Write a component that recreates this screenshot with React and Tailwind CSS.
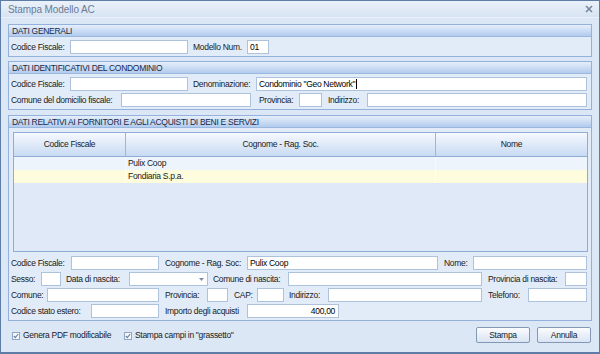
import React from 'react';

const L = ({ c = '', children }) => (
  <div className={`shrink-0 h-[14px] leading-[14px] whitespace-nowrap text-[#1a1a1a] ${c}`}>{children}</div>
);

const I = ({ c = '', children }) => (
  <div className={`shrink-0 h-[14px] bg-white border border-[#aec2dc] leading-[12px] px-[2px] whitespace-nowrap overflow-hidden ${c}`}>{children}</div>
);

function Group({ title, c = '', children }) {
  return (
    <div className={`border border-[#93b1db] bg-[#e2ecf8] ${c}`}>
      <div className="h-[12px] bg-linear-to-b from-[#e6effb] to-[#b2cbed] border-b border-[#9ab7df] px-[3px] leading-[12px] text-[#17294a]">
        {title}
      </div>
      {children}
    </div>
  );
}

function Check({ children, c = '' }) {
  return (
    <div className={`flex items-center ${c}`}>
      <div className="w-[8px] h-[8px] shrink-0 border border-[#8fa6c6] bg-[#f4f7fb] flex items-center justify-center">
        <svg width="6" height="6" viewBox="0 0 6 6">
          <path d="M0.8 3 L2.3 4.6 L5.2 1" fill="none" stroke="#6c7f99" strokeWidth="1.1" />
        </svg>
      </div>
      <span className="ml-[3px] text-[#1a1a1a] whitespace-nowrap">{children}</span>
    </div>
  );
}

function Btn({ children }) {
  return (
    <div className="w-[54px] h-[16px] rounded-[2px] border border-[#8497b5] bg-linear-to-b from-[#fbfcfe] to-[#d9e4f3] flex items-center justify-center text-[#1a1a1a]">
      {children}
    </div>
  );
}

export default function App() {
  return (
    <div className="w-[600px] h-[354px] border border-[#5d7ca6] border-b-2 bg-[#dce7f5] flex flex-col font-['Liberation_Sans',Arial,sans-serif] text-[8.5px] tracking-[-0.3px] overflow-hidden">
      <div className="h-[17px] shrink-0 bg-linear-to-b from-[#eaf1fa] to-[#d8e4f3] border-b border-[#e9f0fa] flex items-center justify-between pl-[7px] pr-[6px]">
        <span className="text-[10px] tracking-[-0.1px] text-[#6b7b93]">Stampa Modello AC</span>
        <svg width="8" height="8" viewBox="0 0 8 8">
          <path d="M1 1 L7 7 M7 1 L1 7" stroke="#76869b" strokeWidth="1.6" />
        </svg>
      </div>

      <div className="flex flex-col px-[7px] pt-[6px]">
        <Group title="DATI GENERALI">
          <div className="flex pl-[2px] pt-[3px] pb-[2px]">
            <L c="w-[59px]">Codice Fiscale:</L>
            <I c="w-[118px]" />
            <L c="w-[54px] ml-[5px]">Modello Num.</L>
            <I c="w-[22px]">01</I>
          </div>
        </Group>

        <Group title="DATI IDENTIFICATIVI DEL CONDOMINIO" c="mt-[4px]">
          <div className="flex flex-col gap-[2px] pl-[2px] pt-[3px] pb-[2px]">
            <div className="flex">
              <L c="w-[59px]">Codice Fiscale:</L>
              <I c="w-[118px]" />
              <L c="w-[63px] ml-[5px]">Denominazione:</L>
              <I c="w-[331px] flex items-center">
                Condominio "Geo Network"<span className="inline-block w-px h-[10px] bg-black ml-px" />
              </I>
            </div>
            <div className="flex">
              <L c="w-[110px]">Comune del domicilio fiscale:</L>
              <I c="w-[130px]" />
              <L c="w-[40px] ml-[8px]">Provincia:</L>
              <I c="w-[23px]" />
              <L c="w-[39px] ml-[6px]">Indirizzo:</L>
              <I c="w-[220px]" />
            </div>
          </div>
        </Group>

        <Group title="DATI RELATIVI AI FORNITORI E AGLI ACQUISTI DI BENI E SERVIZI" c="mt-[5px]">
          <div className="pl-[4px] pr-[3px] pt-[4px]">
            <div className="h-[120px] border border-[#8eacd6] bg-[#dfe9f7] flex flex-col">
              <div className="h-[24px] shrink-0 flex bg-linear-to-b from-[#f6f9fe] to-[#c8daf2] border-b border-[#8fadd7] text-[#1a1a1a]">
                <div className="w-[112px] border-r border-[#9bb6dc] flex items-center justify-center">Codice Fiscale</div>
                <div className="w-[310px] border-r border-[#9bb6dc] flex items-center justify-center">Cognome - Rag. Soc.</div>
                <div className="flex-1 flex items-center justify-center">Nome</div>
              </div>
              <div className="h-[13px] flex bg-[#eef4fc] text-[#1a1a1a] leading-[13px]">
                <div className="w-[112px] border-r border-[#f6f9fe]" />
                <div className="w-[310px] border-r border-[#f6f9fe] pl-[2px]">Pulix Coop</div>
                <div className="flex-1" />
              </div>
              <div className="h-[13px] flex bg-[#fdfcdd] text-[#1a1a1a] leading-[13px]">
                <div className="w-[112px] border-r border-[#fffff2]" />
                <div className="w-[310px] border-r border-[#fffff2] pl-[2px]">Fondiaria S.p.a.</div>
                <div className="flex-1" />
              </div>
            </div>
          </div>

          <div className="flex flex-col gap-[2px] pl-[2px] pt-[4px] pb-[2px]">
            <div className="flex">
              <L c="w-[60px]">Codice Fiscale:</L>
              <I c="w-[88px]" />
              <L c="w-[82px] ml-[6px]">Cognome - Rag. Soc:</L>
              <I c="w-[191px]">Pulix Coop</I>
              <L c="w-[29px] ml-[6px]">Nome:</L>
              <I c="w-[114px]" />
            </div>
            <div className="flex">
              <L c="w-[30px]">Sesso:</L>
              <I c="w-[20px]" />
              <L c="w-[63px] ml-[5px]">Data di nascita:</L>
              <I c="w-[79px] flex items-center justify-end pr-[3px]">
                <svg width="5" height="3" viewBox="0 0 5 3">
                  <path d="M0 0 H5 L2.5 3 Z" fill="#7d8ea8" />
                </svg>
              </I>
              <L c="w-[75px] ml-[5px]">Comune di nascita:</L>
              <I c="w-[194px]" />
              <L c="w-[77px] ml-[6px]">Provincia di nascita:</L>
              <I c="w-[22px]" />
            </div>
            <div className="flex">
              <L c="w-[36px]">Comune:</L>
              <I c="w-[112px]" />
              <L c="w-[42px] ml-[6px]">Provincia:</L>
              <I c="w-[21px]" />
              <L c="w-[23px] ml-[6px]">CAP:</L>
              <I c="w-[27px]" />
              <L c="w-[39px] ml-[5px]">Indirizzo:</L>
              <I c="w-[154px]" />
              <L c="w-[40px] ml-[6px]">Telefono:</L>
              <I c="w-[59px]" />
            </div>
            <div className="flex">
              <L c="w-[80px]">Codice stato estero:</L>
              <I c="w-[68px]" />
              <L c="w-[82px] ml-[6px]">Importo degli acquisti</L>
              <I c="w-[92px] text-right pr-[3px]">400,00</I>
            </div>
          </div>
        </Group>

        <div className="flex justify-between">
          <div className="flex mt-[7px] pl-[4px]">
            <Check c="w-[112px]">Genera PDF modificabile</Check>
            <Check>Stampa campi in "grassetto"</Check>
          </div>
          <div className="flex gap-[7px] mt-[6px] mr-[1px]">
            <Btn>Stampa</Btn>
            <Btn>Annulla</Btn>
          </div>
        </div>
      </div>
    </div>
  );
}
